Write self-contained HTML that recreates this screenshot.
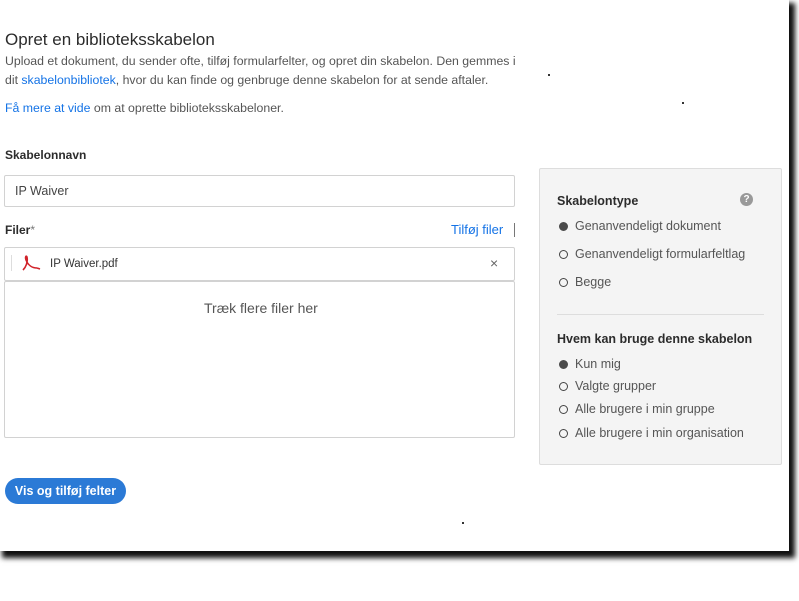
<!DOCTYPE html>
<html><head><meta charset="utf-8"><style>
*{box-sizing:border-box;margin:0;padding:0}
body{width:799px;height:601px;background:#fff;font-family:"Liberation Sans",sans-serif;color:#4b4b4b;position:relative;overflow:hidden}
.page{position:absolute;left:0;top:0;width:789px;height:551px;background:#fff;box-shadow:4px 5px 5px 2px #111}
.a{position:absolute;white-space:nowrap}
.b{color:#1473e6}
.box{position:absolute;border:1px solid #d2d2d2;border-radius:2px;background:#fff}
.r{position:absolute;left:559px;width:9px;height:9px;border-radius:50%;border:1.5px solid #444}
.r.f{background:#4a4a4a;border-color:#4a4a4a}
.o{position:absolute;left:575px;font-size:12.5px;color:#555;white-space:nowrap}
</style></head><body>
<div class="page">
<div class="a" style="left:5px;top:30px;font-size:17px;color:#2c2c2c">Opret en biblioteksskabelon</div>
<div class="a" style="left:5px;top:52px;font-size:12.3px;line-height:19px;color:#555">Upload et dokument, du sender ofte, tilføj formularfelter, og opret din skabelon. Den gemmes i<br>dit <span class="b">skabelonbibliotek</span>, hvor du kan finde og genbruge denne skabelon for at sende aftaler.</div>
<div class="a" style="left:5px;top:101px;font-size:12.3px;color:#555"><span class="b">Få mere at vide</span> om at oprette biblioteksskabeloner.</div>
<div class="a" style="left:5px;top:148px;font-size:12px;font-weight:bold;color:#2c2c2c">Skabelonnavn</div>
<div class="box" style="left:4px;top:175px;width:511px;height:32px"></div>
<div class="a" style="left:15px;top:184px;font-size:12.5px;color:#444">IP Waiver</div>
<div class="a" style="left:5px;top:223px;font-size:12px;font-weight:bold;color:#2c2c2c">Filer<span style="font-weight:normal;color:#777">*</span></div>
<div class="a b" style="left:451px;top:222px;font-size:13px">Tilføj filer</div>
<div class="a" style="left:514px;top:223px;width:1px;height:14px;background:#777"></div>
<div class="box" style="left:4px;top:247px;width:511px;height:34px"></div>
<div class="a" style="left:11px;top:255px;width:1px;height:16px;background:#ddd"></div>
<svg class="a" style="left:20px;top:254px" width="22" height="18" viewBox="0 0 22 18"><path d="M3 16 C6 13 8 8 7 3 C6 1 5 3 6 6 C8 11 12 14 17 14 M17 14 L20 15" stroke="#d1232a" stroke-width="1.6" fill="none"/></svg>
<div class="a" style="left:50px;top:258px;font-size:11.5px;color:#333">IP Waiver.pdf</div>
<div class="a" style="left:490px;top:255px;font-size:14px;color:#666">×</div>
<div class="box" style="left:4px;top:281px;width:511px;height:157px"></div>
<div class="a" style="left:204px;top:300px;font-size:14px;color:#555">Træk flere filer her</div>
<div class="a" style="left:5px;top:478px;width:121px;height:26px;border-radius:13px;background:#2b7ad6;color:#fff;font-size:12.5px;font-weight:bold;text-align:center;line-height:26px">Vis og tilføj felter</div>

<div class="box" style="left:539px;top:168px;width:243px;height:297px;background:#f4f4f4;border-color:#ddd"></div>
<div class="a" style="left:557px;top:194px;font-size:12.5px;font-weight:bold;color:#2c2c2c">Skabelontype</div>
<div class="a" style="left:740px;top:193px;width:13px;height:13px;border-radius:50%;background:#999;color:#fff;font-size:10px;font-weight:bold;text-align:center;line-height:13px">?</div>
<div class="r f" style="top:222px"></div><div class="o" style="top:219px">Genanvendeligt dokument</div>
<div class="r" style="top:250px"></div><div class="o" style="top:247px">Genanvendeligt formularfeltlag</div>
<div class="r" style="top:278px"></div><div class="o" style="top:275px">Begge</div>
<div class="a" style="left:557px;top:314px;width:207px;height:1px;background:#ddd"></div>
<div class="a" style="left:557px;top:332px;font-size:12.5px;font-weight:bold;color:#2c2c2c">Hvem kan bruge denne skabelon</div>
<div class="r f" style="top:360px"></div><div class="o" style="top:357px">Kun mig</div>
<div class="r" style="top:382px"></div><div class="o" style="top:379px">Valgte grupper</div>
<div class="r" style="top:405px"></div><div class="o" style="top:402px">Alle brugere i min gruppe</div>
<div class="r" style="top:429px"></div><div class="o" style="top:426px">Alle brugere i min organisation</div>
<div class="a" style="left:548px;top:74px;width:2px;height:2px;background:#333"></div>
<div class="a" style="left:682px;top:102px;width:2px;height:2px;background:#333"></div>
<div class="a" style="left:462px;top:522px;width:2px;height:2px;background:#333"></div>
</div>
</body></html>
